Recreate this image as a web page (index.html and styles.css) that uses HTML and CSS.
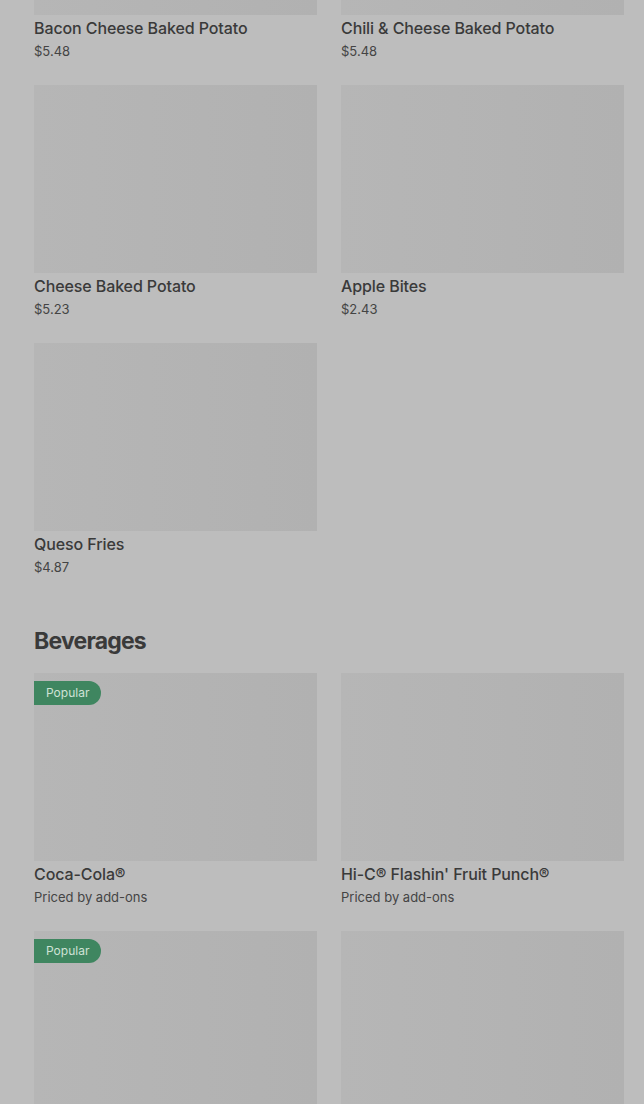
FILE: index.html
```html
<!DOCTYPE html>
<html lang="en">
<head>
    <meta charset="UTF-8">
    <title>Menu</title>
    <link rel="stylesheet" href="styles.css">
</head>
<body>
    <main class="menu">
        <section class="secao">
            <div class="grade grade-topo">
                <div class="item">
                    <div class="foto"></div>
                    <h3>Bacon Cheese Baked Potato</h3>
                    <p class="preco">$5.48</p>
                </div>
                <div class="item">
                    <div class="foto"></div>
                    <h3>Chili &amp; Cheese Baked Potato</h3>
                    <p class="preco">$5.48</p>
                </div>
                <div class="item">
                    <div class="foto"></div>
                    <h3>Cheese Baked Potato</h3>
                    <p class="preco">$5.23</p>
                </div>
                <div class="item">
                    <div class="foto"></div>
                    <h3>Apple Bites</h3>
                    <p class="preco">$2.43</p>
                </div>
                <div class="item">
                    <div class="foto"></div>
                    <h3>Queso Fries</h3>
                    <p class="preco">$4.87</p>
                </div>
            </div>
        </section>

        <section class="secao">
            <h2>Beverages</h2>
            <div class="grade">
                <div class="item">
                    <div class="foto"><span class="selo">Popular</span></div>
                    <h3>Coca-Cola&reg;</h3>
                    <p class="preco">Priced by add-ons</p>
                </div>
                <div class="item">
                    <div class="foto"></div>
                    <h3>Hi-C&reg; Flashin' Fruit Punch&reg;</h3>
                    <p class="preco">Priced by add-ons</p>
                </div>
                <div class="item">
                    <div class="foto"><span class="selo">Popular</span></div>
                </div>
                <div class="item">
                    <div class="foto"></div>
                </div>
            </div>
        </section>
    </main>
</body>
</html>
```

FILE: styles.css
```css
body { margin: 0; padding: 0; background: #bdbdbd; color: #3b3b3b; font-family: Inter, "Noto Sans", sans-serif; overflow: hidden; }
.menu { padding: 0 20px 0 34px; }
.secao { margin-bottom: 47px; }
.secao h2 { margin: 0 0 16px; padding-top: 1px; font-size: 23px; line-height: 32px; font-weight: 700; letter-spacing: -0.8px; color: #3a3a3a; }
.grade { display: grid; grid-template-columns: 283px 283px; column-gap: 24px; row-gap: 24px; }
.grade-topo { margin-top: -173px; }
.item { height: 234px; }
.foto { position: relative; height: 188px; background: linear-gradient(90deg, #b6b6b6, #b1b1b1); }
.item h3 { margin: 3px 0 0; font-size: 16px; line-height: 20px; font-weight: 500; letter-spacing: -0.1px; color: #3a3a3a; }
.preco { margin: 4px 0 0; font-size: 13px; line-height: 18px; color: #444; }
.selo { position: absolute; top: 8px; left: 0; height: 24px; line-height: 24px; padding: 0 12px 0 12px; font-size: 12px; color: #cfe2d6; background: #3f8660; border-radius: 0 12px 12px 0; }
```
